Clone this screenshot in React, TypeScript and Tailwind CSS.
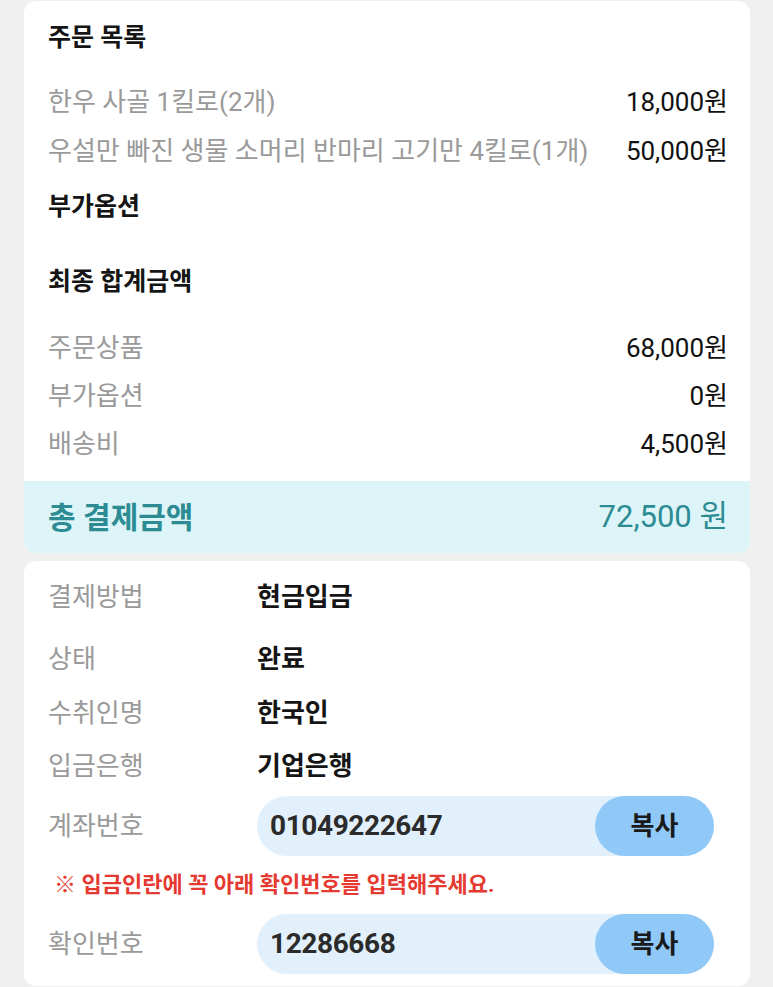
import React from "react";

const font = { fontFamily: "Roboto, 'Noto Sans CJK KR', sans-serif" };

type Line = { label: string; value: string };

const orderItems: Line[] = [
  { label: "한우 사골 1킬로(2개)", value: "18,000원" },
  { label: "우설만 빠진 생물 소머리 반마리 고기만 4킬로(1개)", value: "50,000원" },
];

const totals: Line[] = [
  { label: "주문상품", value: "68,000원" },
  { label: "부가옵션", value: "0원" },
  { label: "배송비", value: "4,500원" },
];

function CopyField({ label, value, className }: { label: string; value: string; className?: string }) {
  return (
    <div className={`flex h-[60px] items-center ${className ?? ""}`}>
      <div className="w-[209px] shrink-0 text-[26px] text-[#9a9a9a]">{label}</div>
      <div className="mr-3 flex h-full flex-1 items-center justify-between rounded-full bg-[#e2f0fc] pl-[13px]">
        <span className="text-[28px] font-bold tracking-[-0.4px] text-[#2b2b2b]">{value}</span>
        <button className="h-full w-[119px] rounded-full bg-[#90c9f8] text-[26px] font-bold text-[#1a1a1a]">
          복사
        </button>
      </div>
    </div>
  );
}

export default function App() {
  return (
    <div className="min-h-[987px] bg-[#f0f0f0] pt-px pb-px" style={font}>
      <div className="ml-6 mr-[23px] overflow-hidden rounded-xl bg-white">
        <div className="pl-6 pr-[22px] pt-[13px]">
          <h2 className="flex h-12 items-center text-[25px] font-bold text-[#151515]">주문 목록</h2>
          <div className="mt-4">
            {orderItems.map((item) => (
              <div key={item.label} className="flex h-[49px] items-center justify-between text-[26px]">
                <span className="text-[#9a9a9a]">{item.label}</span>
                <span className="text-[#111]">{item.value}</span>
              </div>
            ))}
          </div>
          <h2 className="mt-[7px] flex h-12 items-center text-[25px] font-bold text-[#151515]">부가옵션</h2>
          <h2 className="mt-[27px] flex h-12 items-center text-[25px] font-bold text-[#151515]">최종 합계금액</h2>
          <div className="mt-[18px]">
            {totals.map((row) => (
              <div key={row.label} className="flex h-12 items-center justify-between text-[26px]">
                <span className="text-[#9a9a9a]">{row.label}</span>
                <span className="text-[#111]">{row.value}</span>
              </div>
            ))}
          </div>
        </div>
        <div className="mt-[13px] flex h-[72px] items-center justify-between bg-[#ddf5f8] pl-6 pr-[22px] text-[#2d8c93]">
          <span className="text-[30px] font-bold">총 결제금액</span>
          <span className="text-[31px]">72,500 원</span>
        </div>
      </div>

      <div className="ml-6 mr-[23px] mt-2 rounded-xl bg-white pl-6 pr-6 pt-3 pb-3">
        <div className="flex h-12 items-center text-[26px]">
          <span className="w-[209px] shrink-0 text-[#9a9a9a]">결제방법</span>
          <span className="font-bold text-[#151515]">현금입금</span>
        </div>
        <div className="mt-[14px] flex h-12 items-center text-[26px]">
          <span className="w-[209px] shrink-0 text-[#9a9a9a]">상태</span>
          <span className="font-bold text-[#151515]">완료</span>
        </div>
        <div className="mt-[6px] flex h-12 items-center text-[26px]">
          <span className="w-[209px] shrink-0 text-[#9a9a9a]">수취인명</span>
          <span className="font-bold text-[#151515]">한국인</span>
        </div>
        <div className="mt-[5px] flex h-12 items-center text-[26px]">
          <span className="w-[209px] shrink-0 text-[#9a9a9a]">입금은행</span>
          <span className="font-bold text-[#151515]">기업은행</span>
        </div>
        <CopyField label="계좌번호" value="01049222647" className="mt-[6px]" />
        <p className="flex h-[56px] items-center pl-[6px] text-[22px] font-bold text-[#e53a32]">
          ※ 입금인란에 꼭 아래 확인번호를 입력해주세요.
        </p>
        <CopyField label="확인번호" value="12286668" className="mt-[2px]" />
      </div>
    </div>
  );
}
